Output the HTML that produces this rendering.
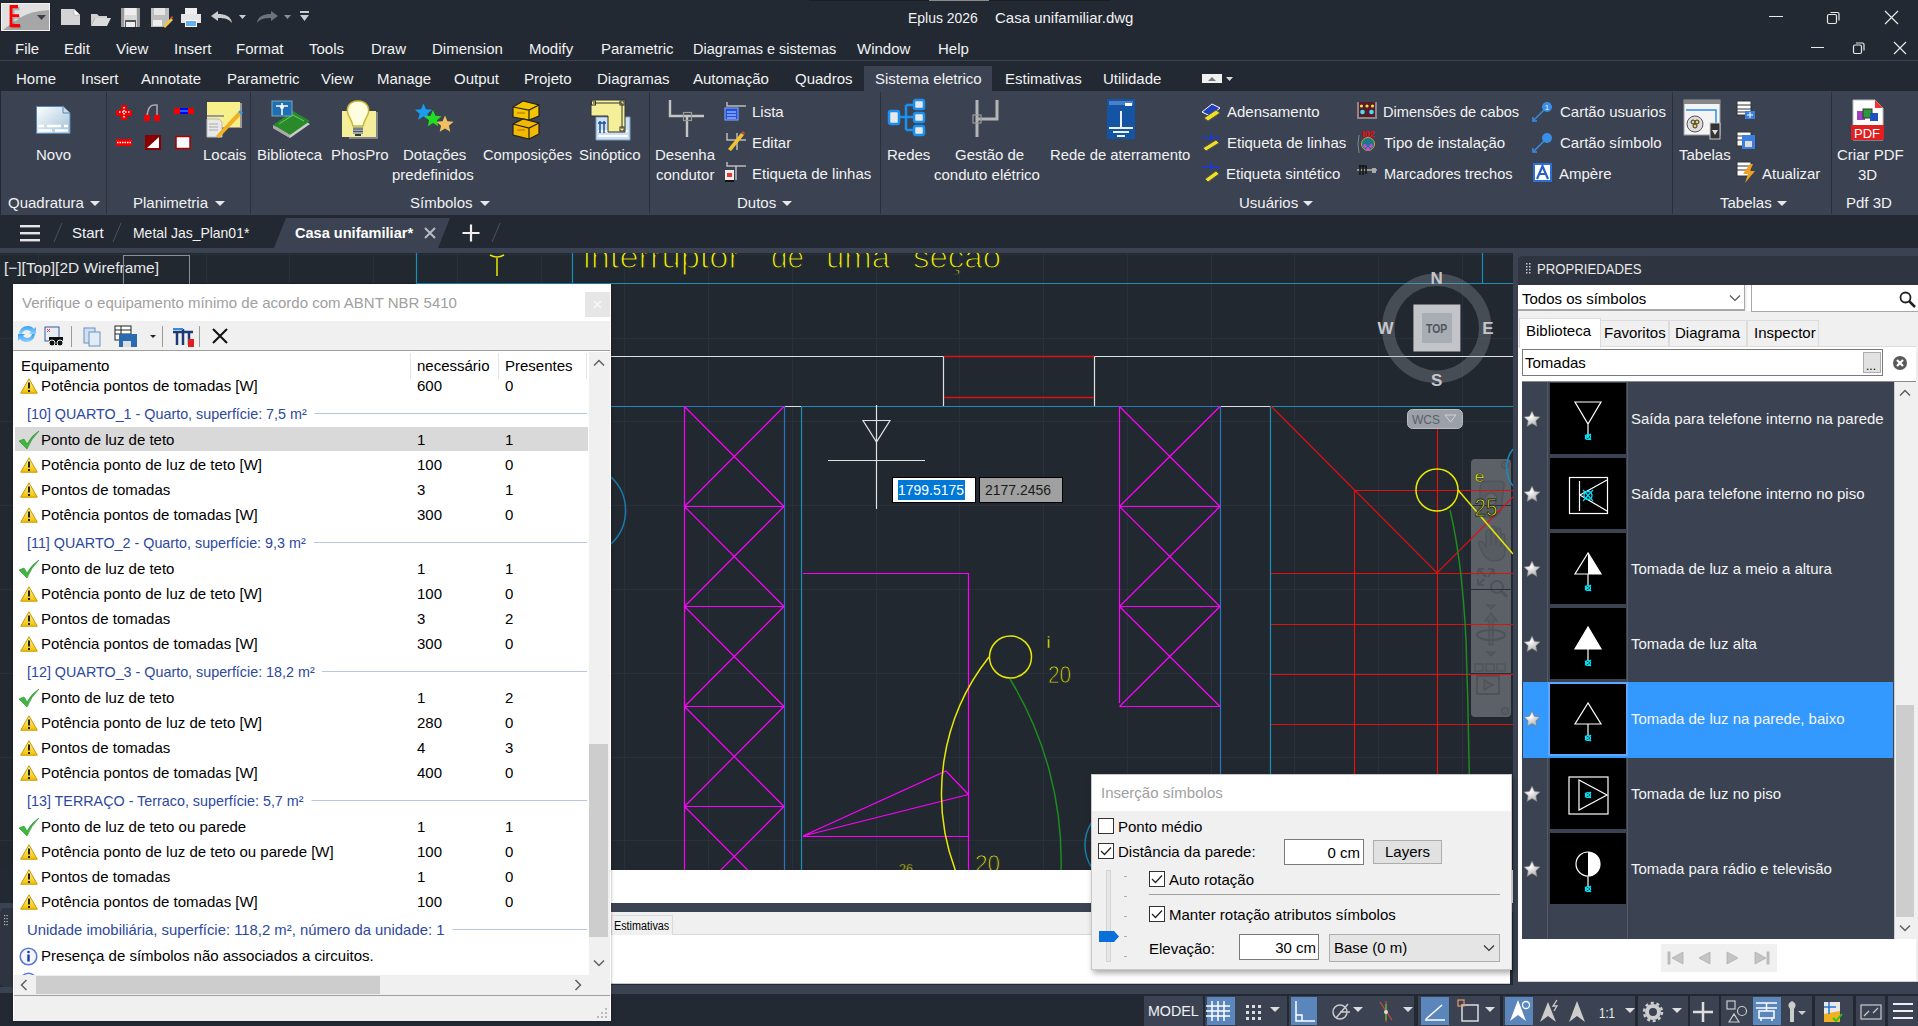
<!DOCTYPE html>
<html><head><meta charset="utf-8">
<style>
*{margin:0;padding:0;box-sizing:border-box}
html,body{width:1918px;height:1026px;overflow:hidden;background:#232933;font-family:"Liberation Sans",sans-serif}
.a{position:absolute}
.t{position:absolute;white-space:pre;font-size:15px;line-height:20px;color:#f2f2f2}
.dk{color:#000}
svg{position:absolute;overflow:visible}
</style></head><body>

<!-- ============ TITLE BAR ============ -->
<div id="title">
<div class="a" style="left:809px;top:0;width:301px;height:1px;background:#1a1d22"></div><div class="a" style="left:929px;top:0;width:60px;height:1px;background:#8a8a8a"></div>
<!-- E button -->
<svg style="left:0;top:2px" width="52" height="30"><rect x="0.5" y="0.5" width="50" height="29" fill="#1e1e1e"/><rect x="1" y="1" width="49" height="28" fill="#f2f2f2"/><rect x="2" y="2" width="47" height="26" fill="#a6a6a6"/><path d="M2 2H49V8Q30 9 20 16Q10 22 3 28H2Z" fill="#e0e0e0"/>
<path d="M10.5 4H18.5V7.2H13.5V12.6H19V15.8H13.5V22H20V25.2H10.5Z" fill="#555" opacity="0.35" transform="translate(1 1)"/>
<path d="M9.6 3H18V6.3H12.4V12.3H19V15H12.4V22H20V25.2H9.6Z" fill="#ff0000"/>
<path d="M37 13H46L41.5 18Z" fill="#3c4048"/></svg>
<!-- QAT icons -->
<svg style="left:60px;top:8px" width="22" height="18"><path d="M1 1H14L20 7V17H1Z" fill="#d4d4d4"/><path d="M14 1V7H20" fill="#fff" stroke="#999" stroke-width="0.5"/></svg>
<svg style="left:90px;top:11px" width="22" height="16"><path d="M1 3H7L9 5H17V7H5L1 15Z" fill="#cfcfcf"/><path d="M5 7H21L17 15H1Z" fill="#dcdcdc"/></svg>
<svg style="left:120px;top:7px" width="22" height="21"><path d="M1 1H20V20H1Z" fill="#d9d9d9"/><path d="M1 1H4V20H1ZM17 1H20V20H17Z" fill="#999"/><rect x="5" y="1" width="11" height="7" fill="#eee"/><rect x="5" y="13" width="11" height="7" fill="#555"/><rect x="6" y="15" width="9" height="5" fill="#eee"/></svg>
<svg style="left:150px;top:7px" width="23" height="21"><path d="M1 1H19V14L13 20H1Z" fill="#bdbdbd"/><rect x="4" y="1" width="11" height="7" fill="#e6e6e6"/><rect x="3" y="13" width="9" height="6" fill="#eee"/><path d="M13 19L21 11L23 13L15 21Z" fill="#f2c542"/><path d="M20 11L22 9L23 10L22 12Z" fill="#e44"/></svg>
<svg style="left:180px;top:7px" width="22" height="21"><rect x="5" y="1" width="12" height="6" fill="#eee"/><rect x="1" y="7" width="20" height="9" fill="#e6e6e6"/><rect x="5" y="13" width="12" height="7" fill="#fff"/><rect x="6" y="14" width="10" height="5" fill="#6ab0e8"/></svg>
<svg style="left:210px;top:10px" width="24" height="14"><path d="M1 6L8 1V4C15 4 21 6 22 13C19 9 15 8 8 8V11Z" fill="#cdcdcd"/></svg>
<svg style="left:239px;top:15px" width="8" height="5"><path d="M0 0H7L3.5 4Z" fill="#ccc"/></svg>
<svg style="left:255px;top:10px" width="24" height="14"><path d="M23 6L16 1V4C9 4 3 6 2 13C5 9 9 8 16 8V11Z" fill="#6e737b"/></svg>
<svg style="left:284px;top:15px" width="8" height="5"><path d="M0 0H7L3.5 4Z" fill="#8a8f96"/></svg>
<svg style="left:300px;top:11px" width="10" height="12"><rect x="0" y="0" width="9" height="2" fill="#ccc"/><path d="M0 4H9L4.5 10Z" fill="#ccc"/></svg>
<div class="t" style="left:908px;top:8px;transform:scaleX(0.93);transform-origin:left">Eplus 2026</div>
<div class="t" style="left:995px;top:8px">Casa unifamiliar.dwg</div>
<div class="a" style="left:1769px;top:16px;width:14px;height:1px;background:#e8e8e8"></div>
<svg style="left:1826px;top:10px" width="15" height="15"><rect x="1.5" y="4.5" width="9" height="9" rx="1.5" fill="none" stroke="#e8e8e8" stroke-width="1.2"/><path d="M4.5 2.5H11.5Q13 2.5 13 4V10.5" fill="none" stroke="#e8e8e8" stroke-width="1.2"/></svg>
<svg style="left:1884px;top:10px" width="15" height="15"><path d="M1 1L14 14M14 1L1 14" stroke="#e8e8e8" stroke-width="1.2"/></svg>
</div>

<!-- ============ MENU ============ -->
<div id="menu">
<div class="t" style="left:15px;top:39px">File</div>
<div class="t" style="left:64px;top:39px">Edit</div>
<div class="t" style="left:116px;top:39px">View</div>
<div class="t" style="left:174px;top:39px">Insert</div>
<div class="t" style="left:236px;top:39px">Format</div>
<div class="t" style="left:309px;top:39px">Tools</div>
<div class="t" style="left:371px;top:39px">Draw</div>
<div class="t" style="left:432px;top:39px">Dimension</div>
<div class="t" style="left:529px;top:39px">Modify</div>
<div class="t" style="left:601px;top:39px">Parametric</div>
<div class="t" style="left:693px;top:39px;transform:scaleX(0.965);transform-origin:left">Diagramas e sistemas</div>
<div class="t" style="left:857px;top:39px">Window</div>
<div class="t" style="left:938px;top:39px">Help</div>
<div class="a" style="left:1811px;top:47px;width:13px;height:1px;background:#e8e8e8"></div>
<svg style="left:1852px;top:41px" width="14" height="14"><rect x="1.5" y="4" width="8" height="8.5" rx="1.5" fill="none" stroke="#e8e8e8" stroke-width="1.2"/><path d="M4 2H10.5Q12 2 12 3.5V9.5" fill="none" stroke="#e8e8e8" stroke-width="1.2"/></svg>
<svg style="left:1893px;top:41px" width="14" height="14"><path d="M1 1L13 13M13 1L1 13" stroke="#e8e8e8" stroke-width="1.2"/></svg>
<div class="a" style="left:0;top:60px;width:1918px;height:1px;background:#3c424d"></div>
<div class="a" style="left:864px;top:66px;width:128px;height:25px;background:#3b4352"></div>
<div class="t" style="left:16px;top:69px">Home</div>
<div class="t" style="left:81px;top:69px">Insert</div>
<div class="t" style="left:141px;top:69px">Annotate</div>
<div class="t" style="left:227px;top:69px">Parametric</div>
<div class="t" style="left:321px;top:69px">View</div>
<div class="t" style="left:377px;top:69px">Manage</div>
<div class="t" style="left:454px;top:69px">Output</div>
<div class="t" style="left:524px;top:69px">Projeto</div>
<div class="t" style="left:597px;top:69px">Diagramas</div>
<div class="t" style="left:693px;top:69px">Automação</div>
<div class="t" style="left:795px;top:69px">Quadros</div>
<div class="t" style="left:875px;top:69px">Sistema eletrico</div>
<div class="t" style="left:1005px;top:69px">Estimativas</div>
<div class="t" style="left:1103px;top:69px">Utilidade</div>
<svg style="left:1202px;top:73px" width="32" height="11"><rect x="0" y="1" width="20" height="9" fill="#f0f0f0"/><path d="M6 8H14L10 4Z" fill="#777"/><path d="M24 4H31L27.5 8Z" fill="#ddd"/></svg>
</div>

<!-- ============ RIBBON ============ -->
<div id="ribbon">
<div class="a" style="left:1px;top:91px;width:1917px;height:124px;background:#3b4352"></div>
<div class="a" style="left:106px;top:92px;width:1px;height:122px;background:#2a3039"></div>
<div class="a" style="left:250px;top:92px;width:1px;height:122px;background:#2a3039"></div>
<div class="a" style="left:649px;top:92px;width:1px;height:122px;background:#2a3039"></div>
<div class="a" style="left:880px;top:92px;width:1px;height:122px;background:#2a3039"></div>
<div class="a" style="left:1672px;top:92px;width:1px;height:122px;background:#2a3039"></div>
<div class="a" style="left:1831px;top:92px;width:1px;height:122px;background:#2a3039"></div>
<div class="t" style="left:8px;top:193px;">Quadratura</div>
<svg style="left:90px;top:201px" width="10" height="6"><path d="M0 0H10L5 5Z" fill="#e8e8e8"/></svg>
<div class="t" style="left:133px;top:193px;">Planimetria</div>
<svg style="left:215px;top:201px" width="10" height="6"><path d="M0 0H10L5 5Z" fill="#e8e8e8"/></svg>
<div class="t" style="left:410px;top:193px;">Símbolos</div>
<svg style="left:480px;top:201px" width="10" height="6"><path d="M0 0H10L5 5Z" fill="#e8e8e8"/></svg>
<div class="t" style="left:737px;top:193px;">Dutos</div>
<svg style="left:782px;top:201px" width="10" height="6"><path d="M0 0H10L5 5Z" fill="#e8e8e8"/></svg>
<div class="t" style="left:1239px;top:193px;">Usuários</div>
<svg style="left:1303px;top:201px" width="10" height="6"><path d="M0 0H10L5 5Z" fill="#e8e8e8"/></svg>
<div class="t" style="left:1720px;top:193px;">Tabelas</div>
<svg style="left:1777px;top:201px" width="10" height="6"><path d="M0 0H10L5 5Z" fill="#e8e8e8"/></svg>
<div class="t" style="left:1846px;top:193px;">Pdf 3D</div>
<div class="t" style="left:36px;top:145px;">Novo</div>
<div class="t" style="left:203px;top:145px;">Locais</div>
<div class="t" style="left:257px;top:145px;">Biblioteca</div>
<div class="t" style="left:331px;top:145px;">PhosPro</div>
<div class="t" style="left:403px;top:145px;">Dotações</div>
<div class="t" style="left:392px;top:165px;">predefinidos</div>
<div class="t" style="left:483px;top:145px;transform:scaleX(0.98);transform-origin:left">Composições</div>
<div class="t" style="left:579px;top:145px;">Sinóptico</div>
<div class="t" style="left:655px;top:145px;">Desenha</div>
<div class="t" style="left:656px;top:165px;">condutor</div>
<div class="t" style="left:887px;top:145px;">Redes</div>
<div class="t" style="left:955px;top:145px;">Gestão de</div>
<div class="t" style="left:934px;top:165px;">conduto elétrico</div>
<div class="t" style="left:1050px;top:145px;transform:scaleX(0.99);transform-origin:left">Rede de aterramento</div>
<div class="t" style="left:1679px;top:145px;">Tabelas</div>
<div class="t" style="left:1837px;top:145px;">Criar PDF</div>
<div class="t" style="left:1858px;top:165px;">3D</div>
<div class="t" style="left:752px;top:102px;">Lista</div>
<div class="t" style="left:752px;top:133px;">Editar</div>
<div class="t" style="left:752px;top:164px;">Etiqueta de linhas</div>
<div class="t" style="left:1227px;top:102px;">Adensamento</div>
<div class="t" style="left:1227px;top:133px;">Etiqueta de linhas</div>
<div class="t" style="left:1226px;top:164px;">Etiqueta sintético</div>
<div class="t" style="left:1383px;top:102px;transform:scaleX(0.972);transform-origin:left">Dimensões de cabos</div>
<div class="t" style="left:1384px;top:133px;">Tipo de instalação</div>
<div class="t" style="left:1384px;top:164px;transform:scaleX(0.97);transform-origin:left">Marcadores trechos</div>
<div class="t" style="left:1560px;top:102px;">Cartão usuarios</div>
<div class="t" style="left:1560px;top:133px;">Cartão símbolo</div>
<div class="t" style="left:1559px;top:164px;">Ampère</div>
<div class="t" style="left:1762px;top:164px;">Atualizar</div>
<svg style="left:36px;top:106px" width="35" height="28"><defs><linearGradient id="gn" x1="0" y1="0" x2="1" y2="1"><stop offset="0" stop-color="#ffffff"/><stop offset="1" stop-color="#9fc0d8"/></linearGradient></defs><path d="M0.5 0.5H27L34 7V27.5H0.5Z" fill="url(#gn)" stroke="#5b85b3"/><path d="M27 0.5V7H34" fill="#c8dcec" stroke="#5b85b3"/><path d="M2 20H8M11 20H25M28 20H32M2 24.5H16M19 24.5H32" stroke="#fff" stroke-width="2.5"/></svg>
<svg style="left:115px;top:103px" width="80" height="47">
<path d="M6 2H12V7H17V13H12V17H6V13H1V7H6Z" fill="#e00" /><path d="M4 9H15M9 4V15" stroke="#fff" stroke-width="1.5" stroke-dasharray="1.5 1.5"/>
<path d="M32 14Q33 1 40 2H42V14" fill="none" stroke="#aaa" stroke-width="1.5"/><rect x="29" y="12" width="6" height="6" fill="#e00"/><rect x="39" y="12" width="6" height="6" fill="#e00"/>
<rect x="59" y="5" width="6" height="6" fill="#e00"/><rect x="73" y="5" width="6" height="6" fill="#e00"/><rect x="65" y="5" width="8" height="6" fill="#00f"/><path d="M65 8H73" stroke="#3cf"/>
<path d="M1 36H17V43H1Z" fill="#e00"/><path d="M2 39.5H16" stroke="#fff" stroke-width="1.5" stroke-dasharray="1.5 1"/>
<rect x="30" y="32" width="16" height="15" fill="#800"/><path d="M32 45L44 34V45Z" fill="#fff"/>
<rect x="61" y="33.5" width="14" height="12" fill="#fff" stroke="#a00" stroke-width="1.5"/>
</svg>
<svg style="left:206px;top:101px" width="38" height="38"><path d="M35 2V26H15" fill="none" stroke="#999" stroke-width="2"/><rect x="1" y="1" width="33" height="25" fill="#f7f08a"/><rect x="1" y="14" width="17" height="2" fill="#999"/><path d="M1 18H13L16 21V36H1Z" fill="#e8e8e8" stroke="#bbb"/><path d="M3 23H12M3 26H12M3 29H12" stroke="#aaa"/><path d="M10 35L32 11L35 14L13 37Z" fill="#f0b020"/><path d="M32 11L34 9L37 12L35 14Z" fill="#3a9ae8"/></svg>
<svg style="left:271px;top:100px" width="40" height="40"><path d="M2 28L22 14L39 24L19 38Z" fill="#ccc"/><path d="M2 25L22 11L39 21L19 35Z" fill="#2a8a2a"/><path d="M2 25V28L19 38V35Z" fill="#aaa"/><path d="M8 24L22 15L33 21" fill="none" stroke="#6c6" /><rect x="1" y="1" width="20" height="15" fill="#1f6fb5" stroke="#7ab" /><path d="M11 3V15M5 6H17" stroke="#fff" stroke-width="1.5"/><circle cx="11" cy="7" r="2" fill="#fff"/></svg>
<svg style="left:341px;top:100px" width="37" height="39"><path d="M36 12V38H8" fill="none" stroke="#999" stroke-width="1.5"/><rect x="1" y="11" width="34" height="26" fill="#f4ee9a"/><path d="M17 1C8 1 5 8 7 14C9 19 11 21 12 26H22C23 21 25 19 27 14C29 8 26 1 17 1Z" fill="#fffde0" stroke="#c8b830" stroke-width="1.5"/><rect x="12" y="27" width="10" height="7" fill="#9aa"/><path d="M12 29H22M12 31.5H22" stroke="#556"/><rect x="14" y="34" width="6" height="2" fill="#333"/></svg>
<svg style="left:410px;top:100px" width="50" height="36"><polygon points="13.5,3.5 15.9,9.2 22.1,9.7 17.4,13.8 18.8,19.8 13.5,16.6 8.2,19.8 9.6,13.8 4.9,9.7 11.1,9.2" fill="#1a9cf0"/><polygon points="23.0,10.0 25.4,15.7 31.6,16.2 26.9,20.3 28.3,26.3 23.0,23.1 17.7,26.3 19.1,20.3 14.4,16.2 20.6,15.7" fill="#22dd22"/><polygon points="35.0,15.5 37.4,21.2 43.6,21.7 38.9,25.8 40.3,31.8 35.0,28.6 29.7,31.8 31.1,25.8 26.4,21.7 32.6,21.2" fill="#f0c060"/></svg>
<svg style="left:511px;top:99px" width="30" height="42"><path d="M2 8L12 2L28 6V17L18 21L2 18Z" fill="#f5c400" stroke="#222" stroke-width="1.2"/><path d="M2 8L18 11L28 6M18 11V21" fill="none" stroke="#222" stroke-width="1.2"/><path d="M2 25L12 20L28 24V35L18 40L2 36Z" fill="#f5b800" stroke="#222" stroke-width="1.2"/><path d="M2 25L18 29L28 24M18 29V40" fill="none" stroke="#222" stroke-width="1.2"/><path d="M6 14H14M6 31H14" stroke="#b07000"/></svg>
<svg style="left:590px;top:99px" width="42" height="42"><path d="M6 18H40V41H6Z" fill="#cfe0ef" stroke="#7aa0c8"/><path d="M8 32H38M8 37H38" stroke="#fff" stroke-width="2"/><path d="M1 1H35V33H18V17H1Z" fill="#f5ef9a" stroke="#333"/><path d="M3 4H32V30" fill="none" stroke="#333"/><rect x="1.5" y="2" width="4" height="4" fill="none" stroke="#333"/><rect x="30" y="2" width="4" height="4" fill="none" stroke="#333"/><rect x="30" y="28" width="4" height="4" fill="none" stroke="#333"/><path d="M10 22V34M14 22V34M8 24H16" stroke="#1a4fa0" stroke-width="1.5"/></svg>
<svg style="left:668px;top:99px" width="40" height="40"><path d="M2 1V17H36M19 17V38" fill="none" stroke="#c4c4c4" stroke-width="2.4"/><rect x="15.5" y="13.5" width="8" height="8" fill="none" stroke="#999" stroke-width="1.2"/></svg>
<svg style="left:724px;top:100px" width="24" height="84">
<path d="M3 2V6H22" fill="none" stroke="#bbb" stroke-width="1.5"/><rect x="1" y="8" width="13" height="12" fill="#2050e0" stroke="#8af"/><path d="M3 12H12M3 15H12M3 18H12" stroke="#cdf"/>
<path d="M3 33V40H22M13 33V50" fill="none" stroke="#bbb" stroke-width="1.5"/><path d="M4 49L17 33L20 35L7 51Z" fill="#f2c530"/><path d="M17 33L19 31L21 33L20 35Z" fill="#c44"/>
<path d="M3 62V66H22M12 66V80" fill="none" stroke="#bbb" stroke-width="1.5"/><rect x="1" y="70" width="9" height="10" fill="#eee"/><rect x="3" y="73" width="5" height="4" fill="#e33"/><rect x="1" y="80" width="9" height="2" fill="#111"/>
</svg>
<svg style="left:888px;top:98px" width="40" height="40"><rect x="1" y="13" width="10" height="13" rx="2" fill="#e8e8e8" stroke="#1a90f0" stroke-width="2.5"/><rect x="26" y="2" width="10" height="9" rx="2" fill="#e8e8e8" stroke="#1a90f0" stroke-width="2.5"/><rect x="26" y="15" width="10" height="9" rx="2" fill="#e8e8e8" stroke="#1a90f0" stroke-width="2.5"/><rect x="26" y="28" width="10" height="9" rx="2" fill="#e8e8e8" stroke="#1a90f0" stroke-width="2.5"/><path d="M11 19H18M18 7H25M18 19H25M18 32H25M18 7V32" fill="none" stroke="#1a90f0" stroke-width="2.5"/></svg>
<svg style="left:972px;top:99px" width="28" height="40"><path d="M5 1V38M5 20H25V1" fill="none" stroke="#b4b4b4" stroke-width="3"/><rect x="1" y="16" width="8" height="8" fill="none" stroke="#999" stroke-width="1.2"/></svg>
<svg style="left:1107px;top:99px" width="29" height="41"><rect x="0" y="0" width="28" height="40" fill="#1454a4"/><rect x="2" y="2" width="24" height="4" fill="#4a80c8"/><rect x="18" y="4" width="7" height="3" fill="#fff"/><path d="M14 12V29M2 29H26M6 33H22M10 37H18" stroke="#f0f0f0" stroke-width="2"/></svg>
<svg style="left:1200px;top:100px" width="22" height="84">
<path d="M2 12L12 4L20 8L10 16Z" fill="#2040c0" stroke="#fff"/><path d="M4 18L16 10L20 13L8 21Z" fill="#f0e020" stroke="#555"/>
<path d="M2 38H20M11 33V40" stroke="#1a3ae0" stroke-width="1.5"/><path d="M3 48L16 40L19 43L6 51Z" fill="#f0e020" stroke="#555"/>
<path d="M2 67H20M11 62V69" stroke="#1a3ae0" stroke-width="1.5"/><path d="M5 79L16 71L19 74L8 82Z" fill="#f0e020" stroke="#555"/>
</svg>
<svg style="left:1356px;top:100px" width="22" height="84">
<path d="M1 2V19H21V2" fill="#888"/><rect x="3" y="2" width="16" height="15" fill="#5a1a2a"/><circle cx="5.5" cy="6" r="1.6" fill="#f0e040"/><circle cx="11" cy="6" r="1.6" fill="#f0e040"/><circle cx="16.5" cy="6" r="1.6" fill="#f0e040"/><circle cx="6.5" cy="12" r="2.3" fill="#40e0f0"/><circle cx="15.5" cy="12" r="2.3" fill="#40e0f0"/>
<text x="6" y="37" font-size="9" font-family="Liberation Sans" font-weight="bold" fill="#f00">I02</text><circle cx="12" cy="44" r="6.5" fill="#1a7a8a" stroke="#c8a040"/><circle cx="9" cy="46" r="1.8" fill="#e040e0"/><circle cx="15" cy="46" r="1.8" fill="#e040e0"/><circle cx="12" cy="49" r="1.8" fill="#e040e0"/><path d="M3 35Q1 44 3 53" stroke="#7a8a90" fill="none"/>
<path d="M1 70H21" stroke="#999" stroke-width="2"/><path d="M4 65V75M7 65V75M10 66V74" stroke="#111" stroke-width="1.5"/><path d="M3 66H11" stroke="#111" stroke-width="1.2"/><rect x="16" y="68" width="4" height="5" fill="#aaa"/>
</svg>
<svg style="left:1532px;top:100px" width="22" height="84">
<path d="M2 20L14 8" stroke="#3a8ee8" stroke-width="1.5"/><circle cx="15" cy="7" r="5" fill="#3a8ee8"/><path d="M1 17V21H5" fill="none" stroke="#3a8ee8" stroke-width="1.5"/><text x="13" y="10" font-size="7" fill="#fff" font-family="Liberation Sans">1</text>
<path d="M2 51L14 39" stroke="#3a8ee8" stroke-width="1.5"/><circle cx="15" cy="38" r="5" fill="#3a8ee8"/><path d="M1 48V52H5" fill="none" stroke="#3a8ee8" stroke-width="1.5"/>
<rect x="1" y="63" width="19" height="19" fill="#2a70d8"/><rect x="3" y="65" width="15" height="15" fill="#fff"/><path d="M5 79L10.5 66L16 79M7 74H14" fill="none" stroke="#2a60c8" stroke-width="2.2"/>
</svg>
<svg style="left:1684px;top:100px" width="38" height="40"><rect x="0" y="0" width="36" height="35" fill="#f4f4f4" stroke="#999"/><rect x="0" y="0" width="36" height="4" fill="#888"/><path d="M2 10H32V24" fill="none" stroke="#2a90e0" stroke-width="1.5"/><circle cx="11" cy="24" r="8" fill="#ddd" stroke="#555"/><circle cx="9" cy="22" r="2" fill="#f0d060" stroke="#333"/><circle cx="13" cy="22" r="2" fill="#f0d060" stroke="#333"/><circle cx="11" cy="26" r="2" fill="#f0d060" stroke="#333"/><rect x="26" y="23" width="10" height="16" fill="#333" stroke="#ccc"/><path d="M28 30H34L31 35Z" fill="#ddd"/></svg>
<svg style="left:1736px;top:100px" width="22" height="84">
<rect x="1" y="1" width="14" height="14" fill="#fff" stroke="#333"/><path d="M1 5H15M1 9H15M1 12H15" stroke="#333"/><rect x="9" y="11" width="10" height="8" fill="#3a80e0"/><path d="M11 15H17M14 12V18" stroke="#fff"/>
<rect x="1" y="32" width="14" height="14" fill="#fff" stroke="#333"/><path d="M1 36H15M1 40H15" stroke="#333"/><rect x="6" y="35" width="13" height="14" fill="#3a80e0"/><rect x="9" y="41" width="7" height="6" fill="#ddd"/>
<rect x="1" y="62" width="14" height="14" fill="#fff" stroke="#333"/><path d="M1 66H15M1 70H15" stroke="#333"/><path d="M14 64L7 74H12L9 83L19 71H14L17 64Z" fill="#f0a020"/>
</svg>
<svg style="left:1850px;top:99px" width="36" height="42"><path d="M3 1H25L33 9V41H3Z" fill="#fff" stroke="#bbb"/><path d="M25 1V9H33Z" fill="#e33"/><rect x="7" y="12" width="8" height="9" fill="#a040c0"/><rect x="13" y="10" width="9" height="9" fill="#2a9a3a" stroke="#333"/><rect x="20" y="14" width="8" height="8" fill="#2050c0"/><rect x="1" y="26" width="33" height="15" fill="#e02020"/><text x="4" y="39" font-size="13" font-family="Liberation Sans" fill="#fff">PDF</text></svg>
</div>

<!-- ============ FILE TABS ============ -->
<div id="ftabs">
<div class="a" style="left:0;top:248px;width:1918px;height:5px;background:#3b4352"></div>
<svg style="left:0;top:215px" width="520" height="38">
<path d="M274 33L286 3H450L438 33Z" fill="#3b4352"/>
<rect x="20" y="10" width="20" height="2.4" fill="#e6e6e6"/><rect x="20" y="17" width="20" height="2.4" fill="#e6e6e6"/><rect x="20" y="24" width="20" height="2.4" fill="#e6e6e6"/>
<path d="M62 8L54 27M121 8L113 27M500 8L492 27" stroke="#4c535e" stroke-width="1"/>
<path d="M425 13L435 23M435 13L425 23" stroke="#b7bbc2" stroke-width="2"/>
<path d="M471 9.5V26.5M462.5 18H479.5" stroke="#f0f0f0" stroke-width="2.2"/>
</svg>
<div class="t" style="left:72px;top:223px">Start</div>
<div class="t" style="left:133px;top:223px;transform:scaleX(0.93);transform-origin:left">Metal Jas_Plan01*</div>
<div class="t" style="left:295px;top:223px;font-weight:bold;color:#fff;transform:scaleX(0.97);transform-origin:left">Casa unifamiliar*</div>
</div>

<!-- ============ VIEWPORT ============ -->
<div id="viewport">
<div class="a" style="left:0;top:253px;width:1513px;height:617px;background:#222830"></div>
<div class="a" style="left:1471px;top:459px;width:40px;height:258px;background:rgba(150,154,160,0.5);border-radius:4px"></div>
<svg style="left:1471px;top:459px" width="40" height="258">
<g fill="#575b62" stroke="#4e5259" stroke-width="1.2">
<circle cx="34" cy="6" r="3.5"/>
<path d="M9 30Q9 22 18 22H30Q34 22 33 28L30 50Q29 58 20 59Q9 58 9 48Z"/>
<circle cx="20" cy="40" r="6" fill="#62666d"/>
<path d="M8 86Q6 82 10 82Q13 83 15 88V74Q15 71 17.5 71Q20 71 20 74V86V70Q20 67 22.5 67Q25 67 25 70V86V72Q25 69 27.5 69Q30 69 30 72V88V78Q30 75 32 75Q34 75 34 78V92Q34 102 22 102Q14 102 8 86Z"/>
<path d="M7 110L15 118M7 110V116M7 110H13M23 110L17 118M23 110V116M23 110H17M7 126L13 120M7 126V120M7 126H13" fill="none" stroke="#4e5259" stroke-width="2"/>
<circle cx="26" cy="128" r="6" fill="none" stroke="#4e5259" stroke-width="2.2"/><path d="M30 132L36 138" stroke="#4e5259" stroke-width="3"/>
<path d="M16 146H24L20 150Z"/>
<path d="M20 154L14 162H18V186H22V162H26Z"/><ellipse cx="20" cy="176" rx="14" ry="5" fill="none" stroke="#4e5259" stroke-width="2"/>
<path d="M16 193H24L20 197Z"/>
<rect x="4" y="205" width="8" height="7" fill="none"/><rect x="15" y="205" width="8" height="7" fill="none"/><rect x="26" y="205" width="8" height="7" fill="none"/>
<rect x="6" y="217" width="22" height="18" fill="none" stroke-width="1.8"/><path d="M13 221V231L22 226Z"/>
<circle cx="34" cy="252" r="3.5"/>
</g>
</svg>
<svg style="left:0;top:0" width="1918" height="1026"><defs><clipPath id="vp"><rect x="0" y="253" width="1513" height="617"/></clipPath></defs><g clip-path="url(#vp)" fill="none" stroke-width="1" shape-rendering="crispEdges">
<path d="M38.5 253V870 M122.5 253V870 M206.5 253V870 M289.5 253V870 M373.5 253V870 M457.5 253V870 M541.5 253V870 M624.5 253V870 M708.5 253V870 M792.5 253V870 M876.5 253V870 M959.5 253V870 M1043.5 253V870 M1127.5 253V870 M1211.5 253V870 M1294.5 253V870 M1378.5 253V870 M1462.5 253V870 M0 254.5H1513 M0 338.5H1513 M0 421.5H1513 M0 505.5H1513 M0 589.5H1513 M0 673.5H1513 M0 757.5H1513 M0 840.5H1513" stroke="#2a303b"/>
</g><g clip-path="url(#vp)" fill="none" stroke-width="1.2">
<path d="M416.5 253V283.5H1513M572.5 253V283.5M1482.5 253V283.5" stroke="#1a8fb8"/>
<path d="M14 356.5H943.5M943.5 356.5V406M1094.5 356.5V406M1094.5 356.5H1513" stroke="#e0e0e0"/>
<path d="M944 356.5H1094M944 397.5H1094" stroke="#e01010" stroke-width="1.5"/>
<path d="M14 406.5H684M801 406.5H1119M1270 406.5H1513" stroke="#1a8fb8"/>
<path d="M684 406.5H784M1119.5 406.5H1220" stroke="#2a74c0"/>
<path d="M785 406.5H801M1221 406.5H1270" stroke="#e0e0e0"/>
<path d="M784.5 406V870M1220.5 406V870" stroke="#2a74c0"/>
<path d="M801.5 406V870M1270.5 406V870" stroke="#1a8fb8"/>
<path d="M684.5 406V870M684.5 406.5L784 506.5M784 406.5L684.5 506.5M684.5 506.5H784M684.5 506.5L784 606.5M784 506.5L684.5 606.5M684.5 606.5H784M684.5 606.5L784 706.5M784 606.5L684.5 706.5M684.5 706.5H784M684.5 706.5L784 806.5M784 706.5L684.5 806.5M684.5 806.5H784M684.5 806.5L784 906.5M784 806.5L684.5 906.5M684.5 906.5H784" stroke="#ff00ff"/>
<path d="M1119.5 406V703M1119.5 406.5L1220 506.5M1220 406.5L1119.5 506.5M1119.5 506.5H1220M1119.5 506.5L1220 606.5M1220 506.5L1119.5 606.5M1119.5 606.5H1220M1119.5 606.5L1220 706.5M1220 606.5L1119.5 706.5M1119.5 706.5H1220" stroke="#ff00ff"/>
<path d="M803 573.5H968.5V870M803 836.5H968.5M803 836L946 771L968.5 794.5L803 836" stroke="#ff00ff"/>
<path d="M1271 406L1437 573L1513 497M1354.5 490V870M1354.5 490.5H1513M1437.5 427V870M1271 573.5H1513M1271 624.5H1513M1271 674.5H1513M1271 724.5H1513" stroke="#e01010"/>
<circle cx="1437" cy="490" r="21" stroke="#e8e800" stroke-width="1.5"/>
<path d="M1458 490L1513 554" stroke="#e8e800" stroke-width="1.5"/>
<path d="M1450 510Q1462 560 1466 640Q1470 760 1470 870" stroke="#1f8a1f" stroke-width="1.5"/>
<circle cx="1010.5" cy="657" r="21" stroke="#e8e800" stroke-width="1.5"/>
<path d="M989 657A220 220 0 0 0 956 872" stroke="#e8e800" stroke-width="1.5"/>
<path d="M1010 679A349 349 0 0 1 1061 872" stroke="#1f8a1f" stroke-width="1.5"/>
<path d="M611 477A45.7 45.7 0 0 1 611 544" stroke="#1a7aa8" stroke-width="1.5"/><path d="M1092 822A41 41 0 0 0 1092 868" stroke="#1a7aa8" stroke-width="1.5"/>
<path d="M1513 449A30 30 0 0 0 1513 486" stroke="#1a8ac0" stroke-width="1.5"/>
<path d="M490 255Q497 259 504 255M497 258V276" stroke="#e8e800" stroke-width="1.5"/>
<path d="M876.5 405V509M828 460.5H925M863 420.5H890L876.5 442Z" stroke="#e0e0e0" stroke-width="1.2"/>
<g clip-path="url(#vp)" font-family="Liberation Sans" fill="#f0f000" stroke="#222830" stroke-width="1.0">
<text x="583" y="268" font-size="31" textLength="157" lengthAdjust="spacingAndGlyphs" stroke-width="1.2">interruptor</text>
<text x="771" y="268" font-size="31" textLength="33" lengthAdjust="spacingAndGlyphs" stroke-width="1.2">de</text>
<text x="826" y="268" font-size="31" textLength="64" lengthAdjust="spacingAndGlyphs" stroke-width="1.2">uma</text>
<text x="913" y="268" font-size="31" textLength="88" lengthAdjust="spacingAndGlyphs" stroke-width="1.2">seção</text>
<text x="1046.5" y="648" font-size="17" textLength="4" lengthAdjust="spacingAndGlyphs" stroke-width="0.4">i</text>
<text x="1048" y="683" font-size="23.5" textLength="23" lengthAdjust="spacingAndGlyphs" stroke-width="1.0">20</text>
<text x="975" y="872" font-size="23.5" textLength="25" lengthAdjust="spacingAndGlyphs" stroke-width="1.0">20</text>
<text x="1474.5" y="482" font-size="17" textLength="10" lengthAdjust="spacingAndGlyphs" stroke-width="0.5">e</text>
<text x="1474.5" y="516" font-size="24" textLength="23" lengthAdjust="spacingAndGlyphs" stroke-width="1.0">25</text>
<text x="899" y="874" font-size="14" textLength="14" lengthAdjust="spacingAndGlyphs" stroke-width="0.5">26</text>
</g></svg>
<div class="a" style="left:892px;top:477px;width:84px;height:26px;background:#fff;border:1px solid #000"></div>
<div class="a" style="left:898px;top:480px;width:67px;height:20px;background:#0078d7"></div>
<div class="t" style="left:898px;top:480px;color:#fff;transform:scaleX(0.93);transform-origin:left">1799.5175</div>
<div class="a" style="left:979px;top:477px;width:84px;height:26px;background:#a0a0a0;border:1px solid #000"></div>
<div class="t" style="left:985px;top:480px;color:#1a1a1a;transform:scaleX(0.93);transform-origin:left">2177.2456</div>
<div class="t" style="left:4px;top:258px;color:#e8e8e8;transform:scaleX(1.03);transform-origin:left">[−][Top][2D Wireframe]</div>
<div class="a" style="left:123px;top:255px;width:67px;height:29px;border:1px solid #8a8e94;border-bottom:none"></div>
</div>

<svg style="left:1370px;top:262px" width="135" height="170">
<circle cx="66.7" cy="66.2" r="48.5" fill="none" stroke="rgba(150,155,162,0.32)" stroke-width="12.5"/>
<rect x="43.4" y="42.5" width="47" height="47" fill="#c2c4c8"/><rect x="52" y="51" width="30" height="30" fill="#a8adb4"/>
<text x="66.7" y="71" font-size="13" font-family="Liberation Sans" fill="#4f555d" text-anchor="middle" font-weight="bold" transform="translate(66.7 0) scale(0.8 1) translate(-66.7 0)">TOP</text>
<text x="66.7" y="22" font-size="17" font-family="Liberation Sans" fill="#c4c6ca" text-anchor="middle" font-weight="bold">N</text>
<text x="66.7" y="124" font-size="17" font-family="Liberation Sans" fill="#c4c6ca" text-anchor="middle" font-weight="bold">S</text>
<text x="15.5" y="72" font-size="17" font-family="Liberation Sans" fill="#c4c6ca" text-anchor="middle" font-weight="bold">W</text>
<text x="118" y="72" font-size="17" font-family="Liberation Sans" fill="#c4c6ca" text-anchor="middle" font-weight="bold">E</text>
<rect x="37.5" y="147.5" width="55" height="19" rx="5" fill="#9ca0a8" stroke="#b8bbc0"/>
<text x="42" y="162" font-size="12" font-family="Liberation Sans" fill="#5a5f67">WCS</text>
<path d="M75 153H86L80.5 160Z" fill="none" stroke="#d0d2d6" stroke-width="1"/>
</svg>


<!-- ============ BOTTOM / COMMAND ============ -->
<div id="bottom">
<div class="a" style="left:13px;top:870px;width:1500px;height:33px;background:#fff"></div>
<div class="a" style="left:0;top:903px;width:1513px;height:9px;background:#3b4352"></div>
<div class="a" style="left:0;top:908px;width:13px;height:79px;background:#2f3540;border-radius:5px 0 0 5px"></div>
<svg style="left:4px;top:915px" width="4" height="11"><g fill="#b8bcc2"><rect x="0" y="0" width="1.2" height="1.2"/><rect x="2.5" y="0" width="1.2" height="1.2"/><rect x="0" y="3" width="1.2" height="1.2"/><rect x="2.5" y="3" width="1.2" height="1.2"/><rect x="0" y="6" width="1.2" height="1.2"/><rect x="2.5" y="6" width="1.2" height="1.2"/><rect x="0" y="9" width="1.2" height="1.2"/><rect x="2.5" y="9" width="1.2" height="1.2"/></g></svg>
<div class="a" style="left:0;top:987px;width:13px;height:6px;background:#3b4352"></div>
<div class="a" style="left:13px;top:912px;width:1497px;height:23px;background:#f0f0f0;border-bottom:1px solid #d9d9d9"></div>
<div class="a" style="left:611px;top:915px;width:62px;height:20px;background:#f0f0f0;border:1px solid #dadada;border-bottom:none"></div>
<div class="t" style="left:614px;top:917px;font-size:12px;line-height:18px;color:#000;transform:scaleX(0.9);transform-origin:left">Estimativas</div>
<div class="a" style="left:13px;top:935px;width:1497px;height:49px;background:#fff;border-bottom:1px solid #c8c8c8"></div>
<div class="a" style="left:13px;top:985px;width:1905px;height:9px;background:#3b4352"></div>
</div>

<!-- ============ STATUS BAR ============ -->
<div id="status">
<div class="a" style="left:1144px;top:996px;width:59px;height:30px;background:#3b4352"></div>
<div class="a" style="left:1205px;top:996px;width:82px;height:30px;background:#3b4352"></div>
<div class="a" style="left:1289px;top:996px;width:125px;height:30px;background:#3b4352"></div>
<div class="a" style="left:1418px;top:996px;width:82px;height:30px;background:#3b4352"></div>
<div class="a" style="left:1503px;top:996px;width:132px;height:30px;background:#3b4352"></div>
<div class="a" style="left:1638px;top:996px;width:50px;height:30px;background:#3b4352"></div>
<div class="a" style="left:1690px;top:996px;width:29px;height:30px;background:#3b4352"></div>
<div class="a" style="left:1721px;top:996px;width:91px;height:30px;background:#3b4352"></div>
<div class="a" style="left:1815px;top:996px;width:38px;height:30px;background:#3b4352"></div>
<div class="a" style="left:1856px;top:996px;width:29px;height:30px;background:#3b4352"></div>
<div class="a" style="left:1888px;top:996px;width:30px;height:30px;background:#3b4352"></div>
<div class="a" style="left:1207px;top:997px;width:28px;height:28px;background:#5a86bb"></div>
<div class="a" style="left:1291px;top:997px;width:26px;height:28px;background:#5a86bb"></div>
<div class="a" style="left:1421px;top:997px;width:28px;height:28px;background:#5a86bb"></div>
<div class="a" style="left:1505px;top:997px;width:28px;height:28px;background:#5a86bb"></div>
<div class="a" style="left:1753px;top:997px;width:28px;height:28px;background:#5a86bb"></div>
<div class="t" style="left:1148px;top:1001px;transform:scaleX(0.95);transform-origin:left">MODEL</div>
<svg style="left:1100px;top:996px" width="818" height="30">
<path d="M112 5V25M118 5V25M124 5V25M106 10H130M106 15H130M106 20H130" stroke="#fff" stroke-width="1.5"/>
<g fill="#ddd"><rect x="146" y="9" width="3" height="3"/><rect x="152" y="9" width="3" height="3"/><rect x="158" y="9" width="3" height="3"/><rect x="146" y="15" width="3" height="3"/><rect x="152" y="15" width="3" height="3"/><rect x="158" y="15" width="3" height="3"/><rect x="146" y="21" width="3" height="3"/><rect x="152" y="21" width="3" height="3"/><rect x="158" y="21" width="3" height="3"/></g>
<path d="M170 11H180L175 16Z" fill="#ddd"/>
<path d="M196 5V25H215M196 19H202V25" fill="none" stroke="#fff" stroke-width="1.5"/>
<circle cx="240" cy="16" r="7" fill="none" stroke="#ccc" stroke-width="1.5"/><path d="M236 22L248 8M240 16H250" stroke="#ccc" stroke-width="1.5"/>
<path d="M253 11H263L258 16Z" fill="#ddd"/>
<path d="M280 6L292 24M286 5V26" stroke="#c44" stroke-width="1.3"/><path d="M286 8V24" stroke="#3c3" stroke-width="1.3"/><circle cx="286" cy="16" r="2" fill="#ddd"/>
<path d="M303 11H313L308 16Z" fill="#ddd"/>
<path d="M325 24H345M326 23L342 9" stroke="#fff" stroke-width="1.5"/>
<rect x="362" y="9" width="16" height="16" fill="none" stroke="#ddd" stroke-width="1.5"/><rect x="358" y="4" width="6" height="6" fill="none" stroke="#e99a70" stroke-width="1.2"/>
<path d="M385 11H395L390 16Z" fill="#ddd"/>
<path d="M418 4L410 25L418 19L426 25Z" fill="#fff"/><circle cx="426" cy="9" r="3.5" fill="none" stroke="#fff" stroke-width="1.3"/>
<path d="M448 6L440 26L448 20L456 26Z" fill="#ccc"/><path d="M457 4L453 10H457L454 15" fill="none" stroke="#ccc" stroke-width="1.3"/>
<path d="M477 5L469 26L477 20L485 26Z" fill="#ccc"/>
<text x="499" y="22" font-size="15" font-family="Liberation Sans" fill="#eee" textLength="16" lengthAdjust="spacingAndGlyphs">1:1</text>
<path d="M525 12H535L530 17Z" fill="#ddd"/>
<circle cx="553" cy="16" r="6" fill="none" stroke="#ccc" stroke-width="4"/><circle cx="553" cy="16" r="9" fill="none" stroke="#ccc" stroke-width="2.5" stroke-dasharray="3 2.7"/>
<path d="M572 12H582L577 17Z" fill="#ddd"/>
<path d="M603 6V26M593 16H613" stroke="#ddd" stroke-width="2.5"/>
<rect x="627" y="5" width="8" height="8" fill="none" stroke="#ccc" stroke-width="1.2"/><circle cx="642" cy="15" r="4.5" fill="none" stroke="#ccc" stroke-width="1.2"/><path d="M629 26L634 18L639 26Z" fill="none" stroke="#ccc" stroke-width="1.2"/>
<path d="M656 7H677M656 12H677M666.5 7V15M659 15H674V22H659ZM661 22V25M672 22V25" fill="none" stroke="#fff" stroke-width="1.5"/>
<path d="M692 5Q686 8 690 13V26H694V13Q698 8 692 5Z" fill="#ccc"/><path d="M698 15H706L702 19Z" fill="#ccc"/>
<rect x="724" y="6" width="16" height="20" fill="#e8e8e8"/><path d="M724 18L740 15V26H724Z" fill="#f0b020"/><path d="M729 6V18M724 11H736" stroke="#2a70d8" stroke-width="1.5"/><path d="M733 22L736 25L742 18" fill="none" stroke="#2c2" stroke-width="1.8"/>
<rect x="761" y="9" width="20" height="14" fill="none" stroke="#ccc" stroke-width="1.2"/><path d="M764 20L769 15M778 12L773 17" stroke="#ccc" stroke-width="1.3"/>
<path d="M801 0" />
</svg>
<svg style="left:1893px;top:1002px" width="22" height="18"><path d="M0 2H20M0 9H20M0 16H20" stroke="#eee" stroke-width="2"/></svg>
</div>

<!-- ============ LEFT DIALOG ============ -->
<div id="dlg">
<div class="a" style="left:13px;top:284px;width:598px;height:737px;background:#fff;box-shadow:0 0 3px rgba(0,0,0,0.35)"></div>
<div class="t" style="left:22px;top:293px;color:#a0a0a0">Verifique o equipamento mínimo de acordo com ABNT NBR 5410</div>
<div class="a" style="left:585px;top:292px;width:25px;height:25px;background:#e6e6e6"></div>
<svg style="left:593px;top:300px" width="9" height="9"><path d="M1 1L8 8M8 1L1 8" stroke="#fafafa" stroke-width="1.2"/></svg>
<div class="a" style="left:13px;top:321px;width:597px;height:30px;background:#f0f0f0;border-bottom:1px solid #a0a0a0"></div>
<svg style="left:13px;top:321px" width="597" height="30">
<defs><linearGradient id="rf" x1="0" y1="0" x2="0" y2="1"><stop offset="0" stop-color="#3aa0f0"/><stop offset="1" stop-color="#8ed0ff"/></linearGradient></defs>
<path d="M6 13Q7 5 15 5Q19 5 21 8L23 6V13H16L18 11Q16 9 14 9Q10 9 9 13Z" fill="url(#rf)"/><path d="M22 13Q21 21 13 21Q9 21 7 18L5 20V13H12L10 15Q12 17 14 17Q18 17 19 13Z" fill="url(#rf)"/>
<rect x="32" y="6" width="14" height="14" fill="#e6eef6" stroke="#3a5a9a"/><path d="M34 8L37 11M37 8L34 11" stroke="#e33"/><path d="M36 16H50V24H36Z" fill="#111"/><circle cx="39" cy="22" r="3" fill="#111" stroke="#eee"/><circle cx="47" cy="22" r="3" fill="#111" stroke="#eee"/>
<path d="M58.5 5V26" stroke="#999"/>
<rect x="71" y="7" width="11" height="15" fill="#d0e0f0" stroke="#6a90c0"/><rect x="76" y="11" width="11" height="14" fill="#e0ecf6" stroke="#6a90c0"/>
<rect x="102" y="5" width="16" height="14" fill="#fff" stroke="#222"/><path d="M102 9H118M102 13H118M108 5V19" stroke="#222"/><path d="M106 13H124V26H106Z" fill="#2a6ab0"/><rect x="110" y="20" width="8" height="6" fill="#ddd"/>
<path d="M137 14H143L140 17Z" fill="#222"/>
<path d="M149.5 5V26" stroke="#999"/>
<path d="M160 11H180M164 11V24M170 8V24M176 11V24" stroke="#1a3a7a" stroke-width="2.5"/><rect x="175" y="18" width="6" height="8" fill="#e02020"/><path d="M160 8H170" stroke="#3a8ad0" stroke-width="2"/>
<path d="M186.5 5V26" stroke="#999"/>
<path d="M200 8L214 22M214 8L200 22" stroke="#111" stroke-width="2"/>
</svg>
<div class="a" style="left:14px;top:352px;width:575px;height:623px;background:#fff;overflow:hidden" id="lst">
<div class="a" style="left:396px;top:1px;width:1px;height:26px;background:#e5e5e5"></div><div class="a" style="left:484px;top:1px;width:1px;height:26px;background:#e5e5e5"></div><div class="a" style="left:572px;top:1px;width:1px;height:26px;background:#e5e5e5"></div>
<div class="t" style="left:7px;top:4.2px;color:#000;">Equipamento</div>
<div class="t" style="left:403px;top:4.2px;color:#000;">necessário</div>
<div class="t" style="left:491px;top:4.2px;color:#000;">Presentes</div>
<div class="a" style="left:1px;top:75px;width:573px;height:24px;background:#d9d9d9"></div>
<svg style="left:6px;top:25.5px" width="18" height="16"><defs><linearGradient id="wg" x1="0" y1="0" x2="0" y2="1"><stop offset="0" stop-color="#fff6a0"/><stop offset="1" stop-color="#f0c000"/></linearGradient></defs><path d="M9 0.8L17.3 15.2H0.7Z" fill="url(#wg)" stroke="#c89800" stroke-width="1"/><path d="M9 4.5V10.5" stroke="#222" stroke-width="2"/><rect x="8" y="12" width="2" height="2" fill="#222"/></svg>
<div class="t" style="left:27px;top:23.7px;color:#000;">Potência pontos de tomadas [W]</div>
<div class="t" style="left:403px;top:23.7px;color:#000;">600</div>
<div class="t" style="left:491px;top:23.7px;color:#000;">0</div>
<div class="a" style="left:13px;top:60.8px;width:560px;height:1px;background:#b9c6e2"></div>
<div class="t" style="left:13px;top:51.5px;color:#2c48a0;background:#fff;padding-right:8px;transform:scaleX(0.955);transform-origin:left">[10] QUARTO_1 - Quarto, superfície: 7,5 m²</div>
<svg style="left:4px;top:77.6px" width="22" height="20"><path d="M1 11L6 9L9 14Q14 5 21 1Q13 9 9 19Z" fill="#3cb83c" stroke="#2a8a2a" stroke-width="0.6"/></svg>
<div class="t" style="left:27px;top:77.8px;color:#000;">Ponto de luz de teto</div>
<div class="t" style="left:403px;top:77.8px;color:#000;">1</div>
<div class="t" style="left:491px;top:77.8px;color:#000;">1</div>
<svg style="left:6px;top:104.6px" width="18" height="16"><defs><linearGradient id="wg" x1="0" y1="0" x2="0" y2="1"><stop offset="0" stop-color="#fff6a0"/><stop offset="1" stop-color="#f0c000"/></linearGradient></defs><path d="M9 0.8L17.3 15.2H0.7Z" fill="url(#wg)" stroke="#c89800" stroke-width="1"/><path d="M9 4.5V10.5" stroke="#222" stroke-width="2"/><rect x="8" y="12" width="2" height="2" fill="#222"/></svg>
<div class="t" style="left:27px;top:102.8px;color:#000;">Potência ponto de luz de teto [W]</div>
<div class="t" style="left:403px;top:102.8px;color:#000;">100</div>
<div class="t" style="left:491px;top:102.8px;color:#000;">0</div>
<svg style="left:6px;top:129.6px" width="18" height="16"><defs><linearGradient id="wg" x1="0" y1="0" x2="0" y2="1"><stop offset="0" stop-color="#fff6a0"/><stop offset="1" stop-color="#f0c000"/></linearGradient></defs><path d="M9 0.8L17.3 15.2H0.7Z" fill="url(#wg)" stroke="#c89800" stroke-width="1"/><path d="M9 4.5V10.5" stroke="#222" stroke-width="2"/><rect x="8" y="12" width="2" height="2" fill="#222"/></svg>
<div class="t" style="left:27px;top:127.8px;color:#000;">Pontos de tomadas</div>
<div class="t" style="left:403px;top:127.8px;color:#000;">3</div>
<div class="t" style="left:491px;top:127.8px;color:#000;">1</div>
<svg style="left:6px;top:154.6px" width="18" height="16"><defs><linearGradient id="wg" x1="0" y1="0" x2="0" y2="1"><stop offset="0" stop-color="#fff6a0"/><stop offset="1" stop-color="#f0c000"/></linearGradient></defs><path d="M9 0.8L17.3 15.2H0.7Z" fill="url(#wg)" stroke="#c89800" stroke-width="1"/><path d="M9 4.5V10.5" stroke="#222" stroke-width="2"/><rect x="8" y="12" width="2" height="2" fill="#222"/></svg>
<div class="t" style="left:27px;top:152.8px;color:#000;">Potência pontos de tomadas [W]</div>
<div class="t" style="left:403px;top:152.8px;color:#000;">300</div>
<div class="t" style="left:491px;top:152.8px;color:#000;">0</div>
<div class="a" style="left:13px;top:189.8px;width:560px;height:1px;background:#b9c6e2"></div>
<div class="t" style="left:13px;top:180.5px;color:#2c48a0;background:#fff;padding-right:8px;transform:scaleX(0.955);transform-origin:left">[11] QUARTO_2 - Quarto, superfície: 9,3 m²</div>
<svg style="left:4px;top:206.7px" width="22" height="20"><path d="M1 11L6 9L9 14Q14 5 21 1Q13 9 9 19Z" fill="#3cb83c" stroke="#2a8a2a" stroke-width="0.6"/></svg>
<div class="t" style="left:27px;top:206.9px;color:#000;">Ponto de luz de teto</div>
<div class="t" style="left:403px;top:206.9px;color:#000;">1</div>
<div class="t" style="left:491px;top:206.9px;color:#000;">1</div>
<svg style="left:6px;top:233.7px" width="18" height="16"><defs><linearGradient id="wg" x1="0" y1="0" x2="0" y2="1"><stop offset="0" stop-color="#fff6a0"/><stop offset="1" stop-color="#f0c000"/></linearGradient></defs><path d="M9 0.8L17.3 15.2H0.7Z" fill="url(#wg)" stroke="#c89800" stroke-width="1"/><path d="M9 4.5V10.5" stroke="#222" stroke-width="2"/><rect x="8" y="12" width="2" height="2" fill="#222"/></svg>
<div class="t" style="left:27px;top:231.9px;color:#000;">Potência ponto de luz de teto [W]</div>
<div class="t" style="left:403px;top:231.9px;color:#000;">100</div>
<div class="t" style="left:491px;top:231.9px;color:#000;">0</div>
<svg style="left:6px;top:258.7px" width="18" height="16"><defs><linearGradient id="wg" x1="0" y1="0" x2="0" y2="1"><stop offset="0" stop-color="#fff6a0"/><stop offset="1" stop-color="#f0c000"/></linearGradient></defs><path d="M9 0.8L17.3 15.2H0.7Z" fill="url(#wg)" stroke="#c89800" stroke-width="1"/><path d="M9 4.5V10.5" stroke="#222" stroke-width="2"/><rect x="8" y="12" width="2" height="2" fill="#222"/></svg>
<div class="t" style="left:27px;top:256.9px;color:#000;">Pontos de tomadas</div>
<div class="t" style="left:403px;top:256.9px;color:#000;">3</div>
<div class="t" style="left:491px;top:256.9px;color:#000;">2</div>
<svg style="left:6px;top:283.7px" width="18" height="16"><defs><linearGradient id="wg" x1="0" y1="0" x2="0" y2="1"><stop offset="0" stop-color="#fff6a0"/><stop offset="1" stop-color="#f0c000"/></linearGradient></defs><path d="M9 0.8L17.3 15.2H0.7Z" fill="url(#wg)" stroke="#c89800" stroke-width="1"/><path d="M9 4.5V10.5" stroke="#222" stroke-width="2"/><rect x="8" y="12" width="2" height="2" fill="#222"/></svg>
<div class="t" style="left:27px;top:281.9px;color:#000;">Potência pontos de tomadas [W]</div>
<div class="t" style="left:403px;top:281.9px;color:#000;">300</div>
<div class="t" style="left:491px;top:281.9px;color:#000;">0</div>
<div class="a" style="left:13px;top:318.8px;width:560px;height:1px;background:#b9c6e2"></div>
<div class="t" style="left:13px;top:309.5px;color:#2c48a0;background:#fff;padding-right:8px;transform:scaleX(0.955);transform-origin:left">[12] QUARTO_3 - Quarto, superfície: 18,2 m²</div>
<svg style="left:4px;top:335.7px" width="22" height="20"><path d="M1 11L6 9L9 14Q14 5 21 1Q13 9 9 19Z" fill="#3cb83c" stroke="#2a8a2a" stroke-width="0.6"/></svg>
<div class="t" style="left:27px;top:335.9px;color:#000;">Ponto de luz de teto</div>
<div class="t" style="left:403px;top:335.9px;color:#000;">1</div>
<div class="t" style="left:491px;top:335.9px;color:#000;">2</div>
<svg style="left:6px;top:362.7px" width="18" height="16"><defs><linearGradient id="wg" x1="0" y1="0" x2="0" y2="1"><stop offset="0" stop-color="#fff6a0"/><stop offset="1" stop-color="#f0c000"/></linearGradient></defs><path d="M9 0.8L17.3 15.2H0.7Z" fill="url(#wg)" stroke="#c89800" stroke-width="1"/><path d="M9 4.5V10.5" stroke="#222" stroke-width="2"/><rect x="8" y="12" width="2" height="2" fill="#222"/></svg>
<div class="t" style="left:27px;top:360.9px;color:#000;">Potência ponto de luz de teto [W]</div>
<div class="t" style="left:403px;top:360.9px;color:#000;">280</div>
<div class="t" style="left:491px;top:360.9px;color:#000;">0</div>
<svg style="left:6px;top:387.7px" width="18" height="16"><defs><linearGradient id="wg" x1="0" y1="0" x2="0" y2="1"><stop offset="0" stop-color="#fff6a0"/><stop offset="1" stop-color="#f0c000"/></linearGradient></defs><path d="M9 0.8L17.3 15.2H0.7Z" fill="url(#wg)" stroke="#c89800" stroke-width="1"/><path d="M9 4.5V10.5" stroke="#222" stroke-width="2"/><rect x="8" y="12" width="2" height="2" fill="#222"/></svg>
<div class="t" style="left:27px;top:385.9px;color:#000;">Pontos de tomadas</div>
<div class="t" style="left:403px;top:385.9px;color:#000;">4</div>
<div class="t" style="left:491px;top:385.9px;color:#000;">3</div>
<svg style="left:6px;top:412.7px" width="18" height="16"><defs><linearGradient id="wg" x1="0" y1="0" x2="0" y2="1"><stop offset="0" stop-color="#fff6a0"/><stop offset="1" stop-color="#f0c000"/></linearGradient></defs><path d="M9 0.8L17.3 15.2H0.7Z" fill="url(#wg)" stroke="#c89800" stroke-width="1"/><path d="M9 4.5V10.5" stroke="#222" stroke-width="2"/><rect x="8" y="12" width="2" height="2" fill="#222"/></svg>
<div class="t" style="left:27px;top:410.9px;color:#000;">Potência pontos de tomadas [W]</div>
<div class="t" style="left:403px;top:410.9px;color:#000;">400</div>
<div class="t" style="left:491px;top:410.9px;color:#000;">0</div>
<div class="a" style="left:13px;top:447.8px;width:560px;height:1px;background:#b9c6e2"></div>
<div class="t" style="left:13px;top:438.5px;color:#2c48a0;background:#fff;padding-right:8px;transform:scaleX(0.955);transform-origin:left">[13] TERRAÇO - Terraco, superfície: 5,7 m²</div>
<svg style="left:4px;top:464.7px" width="22" height="20"><path d="M1 11L6 9L9 14Q14 5 21 1Q13 9 9 19Z" fill="#3cb83c" stroke="#2a8a2a" stroke-width="0.6"/></svg>
<div class="t" style="left:27px;top:464.9px;color:#000;">Ponto de luz de teto ou parede</div>
<div class="t" style="left:403px;top:464.9px;color:#000;">1</div>
<div class="t" style="left:491px;top:464.9px;color:#000;">1</div>
<svg style="left:6px;top:491.7px" width="18" height="16"><defs><linearGradient id="wg" x1="0" y1="0" x2="0" y2="1"><stop offset="0" stop-color="#fff6a0"/><stop offset="1" stop-color="#f0c000"/></linearGradient></defs><path d="M9 0.8L17.3 15.2H0.7Z" fill="url(#wg)" stroke="#c89800" stroke-width="1"/><path d="M9 4.5V10.5" stroke="#222" stroke-width="2"/><rect x="8" y="12" width="2" height="2" fill="#222"/></svg>
<div class="t" style="left:27px;top:489.9px;color:#000;">Potência ponto de luz de teto ou parede [W]</div>
<div class="t" style="left:403px;top:489.9px;color:#000;">100</div>
<div class="t" style="left:491px;top:489.9px;color:#000;">0</div>
<svg style="left:6px;top:516.7px" width="18" height="16"><defs><linearGradient id="wg" x1="0" y1="0" x2="0" y2="1"><stop offset="0" stop-color="#fff6a0"/><stop offset="1" stop-color="#f0c000"/></linearGradient></defs><path d="M9 0.8L17.3 15.2H0.7Z" fill="url(#wg)" stroke="#c89800" stroke-width="1"/><path d="M9 4.5V10.5" stroke="#222" stroke-width="2"/><rect x="8" y="12" width="2" height="2" fill="#222"/></svg>
<div class="t" style="left:27px;top:514.9px;color:#000;">Pontos de tomadas</div>
<div class="t" style="left:403px;top:514.9px;color:#000;">1</div>
<div class="t" style="left:491px;top:514.9px;color:#000;">0</div>
<svg style="left:6px;top:541.7px" width="18" height="16"><defs><linearGradient id="wg" x1="0" y1="0" x2="0" y2="1"><stop offset="0" stop-color="#fff6a0"/><stop offset="1" stop-color="#f0c000"/></linearGradient></defs><path d="M9 0.8L17.3 15.2H0.7Z" fill="url(#wg)" stroke="#c89800" stroke-width="1"/><path d="M9 4.5V10.5" stroke="#222" stroke-width="2"/><rect x="8" y="12" width="2" height="2" fill="#222"/></svg>
<div class="t" style="left:27px;top:539.9px;color:#000;">Potência pontos de tomadas [W]</div>
<div class="t" style="left:403px;top:539.9px;color:#000;">100</div>
<div class="t" style="left:491px;top:539.9px;color:#000;">0</div>
<div class="a" style="left:13px;top:576.8px;width:560px;height:1px;background:#b9c6e2"></div>
<div class="t" style="left:13px;top:567.5px;color:#2c48a0;background:#fff;padding-right:8px;transform:scaleX(0.99);transform-origin:left">Unidade imobiliária, superfície: 118,2 m², número da unidade: 1</div>
<svg style="left:5px;top:594.7px" width="19" height="19"><circle cx="9.5" cy="9.5" r="8.3" fill="#f4f6fa" stroke="#5a78d8" stroke-width="1.6"/><rect x="8.3" y="7.5" width="2.4" height="7" fill="#1a3ab0"/><circle cx="9.5" cy="5" r="1.3" fill="#1a3ab0"/></svg>
<div class="t" style="left:27px;top:593.9px;color:#000;">Presença de símbolos não associados a circuitos.</div>
<svg style="left:5px;top:619.7px" width="19" height="19"><circle cx="9.5" cy="9.5" r="8.3" fill="#f4f6fa" stroke="#5a78d8" stroke-width="1.6"/><rect x="8.3" y="7.5" width="2.4" height="7" fill="#1a3ab0"/><circle cx="9.5" cy="5" r="1.3" fill="#1a3ab0"/></svg>
</div>
<div class="a" style="left:589px;top:352px;width:21px;height:623px;background:#f0f0f0"></div>
<div class="a" style="left:589px;top:744px;width:19px;height:193px;background:#cdcdcd"></div>
<svg style="left:593px;top:359px" width="12" height="8"><path d="M1 6.5L6 1.5L11 6.5" fill="none" stroke="#606060" stroke-width="1.5"/></svg>
<svg style="left:593px;top:959px" width="12" height="8"><path d="M1 1.5L6 6.5L11 1.5" fill="none" stroke="#606060" stroke-width="1.5"/></svg>
<div class="a" style="left:14px;top:975px;width:596px;height:20px;background:#f0f0f0"></div>
<div class="a" style="left:36px;top:976px;width:344px;height:18px;background:#cdcdcd"></div>
<svg style="left:20px;top:979px" width="8" height="12"><path d="M6.5 1L1.5 6L6.5 11" fill="none" stroke="#606060" stroke-width="1.5"/></svg>
<svg style="left:574px;top:979px" width="8" height="12"><path d="M1.5 1L6.5 6L1.5 11" fill="none" stroke="#606060" stroke-width="1.5"/></svg>
<div class="a" style="left:14px;top:995px;width:596px;height:1px;background:#a0a0a0"></div>
<div class="a" style="left:14px;top:996px;width:596px;height:25px;background:#f0f0f0"></div>
<svg style="left:596px;top:1007px" width="14" height="13"><g fill="#bbb"><rect x="9" y="1" width="2" height="2"/><rect x="5" y="5" width="2" height="2"/><rect x="9" y="5" width="2" height="2"/><rect x="1" y="9" width="2" height="2"/><rect x="5" y="9" width="2" height="2"/><rect x="9" y="9" width="2" height="2"/></g></svg>
</div>

<!-- ============ RIGHT PANEL ============ -->
<div id="panel">
<div class="a" style="left:1513px;top:253px;width:405px;height:732px;background:#3b4352"></div>
<div class="a" style="left:1518px;top:256px;width:400px;height:29px;background:#2f3540;border-top-left-radius:4px"></div>
<svg style="left:1526px;top:263px" width="6" height="12"><g fill="#c8c8c8"><rect x="0" y="0" width="1.5" height="1.5"/><rect x="3" y="0" width="1.5" height="1.5"/><rect x="0" y="3" width="1.5" height="1.5"/><rect x="3" y="3" width="1.5" height="1.5"/><rect x="0" y="6" width="1.5" height="1.5"/><rect x="3" y="6" width="1.5" height="1.5"/><rect x="0" y="9" width="1.5" height="1.5"/><rect x="3" y="9" width="1.5" height="1.5"/></g></svg>
<div class="t" style="left:1537px;top:259px;color:#eaeaea;font-size:14px;transform:scaleX(0.94);transform-origin:left">PROPRIEDADES</div>
<div class="a" style="left:1518px;top:285px;width:400px;height:697px;background:#f0f0f0"></div>
<div class="a" style="left:1518px;top:285px;width:227px;height:26px;background:#fff;border-right:1px solid #a8a8a8;border-bottom:2px solid #a8a8a8"></div>
<div class="t" style="left:1522px;top:289px;color:#000">Todos os símbolos</div>
<svg style="left:1729px;top:294px" width="12" height="8"><path d="M1 1.5L6 6.5L11 1.5" fill="none" stroke="#555" stroke-width="1.2"/></svg>
<div class="a" style="left:1747px;top:285px;width:4px;height:26px;background:#fff"></div>
<div class="a" style="left:1751px;top:285px;width:167px;height:27px;background:#fff;border-left:1px solid #a8a8a8;border-bottom:1px solid #a8a8a8"></div>
<svg style="left:1899px;top:291px" width="18" height="17"><circle cx="6.5" cy="6.5" r="5" fill="none" stroke="#222" stroke-width="1.8"/><path d="M10 10L16 16" stroke="#222" stroke-width="2.5"/></svg>
<div class="a" style="left:1518px;top:346px;width:398px;height:636px;background:#fff;border-top:1px solid #dcdcdc"></div>
<div class="a" style="left:1600px;top:320px;width:69px;height:26px;background:#f0f0f0;border:1px solid #dcdcdc;border-bottom:none"></div>
<div class="t" style="left:1604px;top:323px;color:#000">Favoritos</div>
<div class="a" style="left:1669px;top:320px;width:78px;height:26px;background:#f0f0f0;border:1px solid #dcdcdc;border-bottom:none"></div>
<div class="t" style="left:1675px;top:323px;color:#000">Diagrama</div>
<div class="a" style="left:1747px;top:320px;width:72px;height:26px;background:#f0f0f0;border:1px solid #dcdcdc;border-bottom:none"></div>
<div class="t" style="left:1754px;top:323px;color:#000">Inspector</div>
<div class="a" style="left:1519px;top:318px;width:82px;height:30px;background:#fff;border:1px solid #dcdcdc;border-bottom:none"></div>
<div class="t" style="left:1526px;top:321px;color:#000">Biblioteca</div>
<div class="a" style="left:1522px;top:349px;width:361px;height:27px;background:#fff;border:1px solid #7a7a7a"></div>
<div class="t" style="left:1525px;top:353px;color:#000">Tomadas</div>
<div class="a" style="left:1863px;top:352px;width:18px;height:21px;background:#e1e1e1;border:1px solid #adadad"></div>
<div class="t" style="left:1866px;top:356px;color:#000;font-size:12px">...</div>
<svg style="left:1892px;top:355px" width="16" height="16"><circle cx="8" cy="8" r="7" fill="#5a5a5a"/><path d="M5 5L11 11M11 5L5 11" stroke="#fff" stroke-width="2.2"/></svg>
<div class="a" style="left:1522px;top:381px;width:394px;height:558px;background:#3b4352;border-top:1px solid #8a8a8a"></div>
<div class="a" style="left:1894px;top:382px;width:22px;height:557px;background:#f0f0f0;border-left:1px solid #d0d0d0"></div>
<div class="a" style="left:1896px;top:705px;width:18px;height:212px;background:#cdcdcd"></div>
<svg style="left:1899px;top:389px" width="12" height="8"><path d="M1 6.5L6 1.5L11 6.5" fill="none" stroke="#606060" stroke-width="1.5"/></svg>
<svg style="left:1899px;top:924px" width="12" height="8"><path d="M1 1.5L6 6.5L11 1.5" fill="none" stroke="#606060" stroke-width="1.5"/></svg>
<div class="a" style="left:1547px;top:382px;width:1px;height:557px;background:#555b63"></div><div class="a" style="left:1627px;top:382px;width:1px;height:557px;background:#555b63"></div>
<div class="a" style="left:1523px;top:682px;width:370px;height:76px;background:#3399ff"></div>
<div class="a" style="left:1550px;top:383px;width:76px;height:71px;background:#000"></div>
<svg style="left:1523px;top:410px" width="18" height="18"><defs><radialGradient id="sg0" cx="0.4" cy="0.35" r="0.7"><stop offset="0" stop-color="#fff"/><stop offset="1" stop-color="#aaa"/></radialGradient></defs><polygon points="9.0,1.0 11.4,6.2 17.1,6.9 12.9,10.8 14.0,16.4 9.0,13.6 4.0,16.4 5.1,10.8 0.9,6.9 6.6,6.2" fill="url(#sg0)" stroke="#777" stroke-width="0.6"/></svg>
<div class="t" style="left:1631px;top:409.2px;color:#f4f4f4">Saída para telefone interno na parede</div>
<div class="a" style="left:1550px;top:458px;width:76px;height:71px;background:#000"></div>
<svg style="left:1523px;top:485px" width="18" height="18"><defs><radialGradient id="sg1" cx="0.4" cy="0.35" r="0.7"><stop offset="0" stop-color="#fff"/><stop offset="1" stop-color="#aaa"/></radialGradient></defs><polygon points="9.0,1.0 11.4,6.2 17.1,6.9 12.9,10.8 14.0,16.4 9.0,13.6 4.0,16.4 5.1,10.8 0.9,6.9 6.6,6.2" fill="url(#sg1)" stroke="#777" stroke-width="0.6"/></svg>
<div class="t" style="left:1631px;top:484.2px;color:#f4f4f4">Saída para telefone interno no piso</div>
<div class="a" style="left:1550px;top:533px;width:76px;height:71px;background:#000"></div>
<svg style="left:1523px;top:560px" width="18" height="18"><defs><radialGradient id="sg2" cx="0.4" cy="0.35" r="0.7"><stop offset="0" stop-color="#fff"/><stop offset="1" stop-color="#aaa"/></radialGradient></defs><polygon points="9.0,1.0 11.4,6.2 17.1,6.9 12.9,10.8 14.0,16.4 9.0,13.6 4.0,16.4 5.1,10.8 0.9,6.9 6.6,6.2" fill="url(#sg2)" stroke="#777" stroke-width="0.6"/></svg>
<div class="t" style="left:1631px;top:559.2px;color:#f4f4f4">Tomada de luz a meio a altura</div>
<div class="a" style="left:1550px;top:608px;width:76px;height:71px;background:#000"></div>
<svg style="left:1523px;top:635px" width="18" height="18"><defs><radialGradient id="sg3" cx="0.4" cy="0.35" r="0.7"><stop offset="0" stop-color="#fff"/><stop offset="1" stop-color="#aaa"/></radialGradient></defs><polygon points="9.0,1.0 11.4,6.2 17.1,6.9 12.9,10.8 14.0,16.4 9.0,13.6 4.0,16.4 5.1,10.8 0.9,6.9 6.6,6.2" fill="url(#sg3)" stroke="#777" stroke-width="0.6"/></svg>
<div class="t" style="left:1631px;top:634.2px;color:#f4f4f4">Tomada de luz alta</div>
<div class="a" style="left:1548px;top:682px;width:80px;height:74px;background:#000;border:2px solid #5aa8ff"></div>
<svg style="left:1523px;top:710px" width="18" height="18"><defs><radialGradient id="sg4" cx="0.4" cy="0.35" r="0.7"><stop offset="0" stop-color="#fff"/><stop offset="1" stop-color="#aaa"/></radialGradient></defs><polygon points="9.0,1.0 11.4,6.2 17.1,6.9 12.9,10.8 14.0,16.4 9.0,13.6 4.0,16.4 5.1,10.8 0.9,6.9 6.6,6.2" fill="url(#sg4)" stroke="#777" stroke-width="0.6"/></svg>
<div class="t" style="left:1631px;top:709.2px;color:#f4f4f4">Tomada de luz na parede, baixo</div>
<div class="a" style="left:1550px;top:758px;width:76px;height:71px;background:#000"></div>
<svg style="left:1523px;top:785px" width="18" height="18"><defs><radialGradient id="sg5" cx="0.4" cy="0.35" r="0.7"><stop offset="0" stop-color="#fff"/><stop offset="1" stop-color="#aaa"/></radialGradient></defs><polygon points="9.0,1.0 11.4,6.2 17.1,6.9 12.9,10.8 14.0,16.4 9.0,13.6 4.0,16.4 5.1,10.8 0.9,6.9 6.6,6.2" fill="url(#sg5)" stroke="#777" stroke-width="0.6"/></svg>
<div class="t" style="left:1631px;top:784.2px;color:#f4f4f4">Tomada de luz no piso</div>
<div class="a" style="left:1550px;top:833px;width:76px;height:71px;background:#000"></div>
<svg style="left:1523px;top:860px" width="18" height="18"><defs><radialGradient id="sg6" cx="0.4" cy="0.35" r="0.7"><stop offset="0" stop-color="#fff"/><stop offset="1" stop-color="#aaa"/></radialGradient></defs><polygon points="9.0,1.0 11.4,6.2 17.1,6.9 12.9,10.8 14.0,16.4 9.0,13.6 4.0,16.4 5.1,10.8 0.9,6.9 6.6,6.2" fill="url(#sg6)" stroke="#777" stroke-width="0.6"/></svg>
<div class="t" style="left:1631px;top:859.2px;color:#f4f4f4">Tomada para rádio e televisão</div>
<svg style="left:0;top:0" width="1918" height="1026"><path d="M1575 402H1601L1588 424Z M1588 424V437" fill="none" stroke="#fff" stroke-width="1.2"/><path d="M1585 435L1591 440M1591 434L1585 439" stroke="#00e5ff" stroke-width="1.2"/><circle cx="1588" cy="437" r="2.5" fill="none" stroke="#00e5ff" stroke-width="1.2"/><rect x="1569.5" y="477.5" width="38" height="36" fill="none" stroke="#fff" stroke-width="1.2"/><path d="M1579.5 481V511M1607 480L1580 495L1607 511" fill="none" stroke="#fff" stroke-width="1.2"/><path d="M1583 490L1593 501M1593 490L1583 501" stroke="#00e5ff" stroke-width="1.2"/><circle cx="1588" cy="495.5" r="4" fill="none" stroke="#00e5ff" stroke-width="1.4"/><path d="M1588 553L1575 574H1601Z" fill="none" stroke="#fff" stroke-width="1.2"/><path d="M1588 553L1601 574H1588Z" fill="#fff"/><path d="M1588 574V586" stroke="#fff" stroke-width="1.2"/><path d="M1585 586L1591 591M1591 585L1585 590" stroke="#00e5ff" stroke-width="1.2"/><circle cx="1588" cy="588" r="2.5" fill="none" stroke="#00e5ff" stroke-width="1.2"/><path d="M1588 627L1575 649H1601Z" fill="#fff" stroke="#fff" stroke-width="1.2"/><path d="M1588 649V661" stroke="#fff" stroke-width="1.2"/><path d="M1585 661L1591 666M1591 660L1585 665" stroke="#00e5ff" stroke-width="1.2"/><circle cx="1588" cy="663" r="2.5" fill="none" stroke="#00e5ff" stroke-width="1.2"/><path d="M1588 703L1575 724H1601Z" fill="none" stroke="#fff" stroke-width="1.2"/><path d="M1588 724V736" stroke="#fff" stroke-width="1.2"/><path d="M1585 736L1591 741M1591 735L1585 740" stroke="#00e5ff" stroke-width="1.2"/><circle cx="1588" cy="738" r="2.5" fill="none" stroke="#00e5ff" stroke-width="1.2"/><rect x="1569" y="777" width="39" height="37" fill="none" stroke="#fff" stroke-width="1.2"/><path d="M1579 780L1607 795L1579 810Z" fill="none" stroke="#fff" stroke-width="1.2"/><path d="M1585 793L1591 798M1591 792L1585 797" stroke="#00e5ff" stroke-width="1.2"/><circle cx="1588" cy="795" r="2.5" fill="none" stroke="#00e5ff" stroke-width="1.2"/><circle cx="1588" cy="864" r="12" fill="none" stroke="#fff" stroke-width="1.2"/><path d="M1588 852A12 12 0 0 1 1588 876Z" fill="#fff"/><path d="M1588 876V887" stroke="#fff" stroke-width="1.2"/><path d="M1585 887L1591 892M1591 886L1585 891" stroke="#00e5ff" stroke-width="1.2"/><circle cx="1588" cy="889" r="2.5" fill="none" stroke="#00e5ff" stroke-width="1.2"/></svg>
<div class="a" style="left:1661px;top:944px;width:116px;height:28px;background:#f0f0f0"></div>
<svg style="left:1661px;top:944px" width="116" height="28"><g fill="#c4c4c4" stroke="#b0b0b0" stroke-width="0.8"><rect x="7" y="8" width="2" height="12"/><path d="M22 8V20L11 14Z"/><path d="M49 8V20L38 14Z"/><path d="M66 8V20L77 14Z"/><path d="M94 8V20L105 14Z"/><rect x="106" y="8" width="2" height="12"/></g></svg>
<div class="a" style="left:1518px;top:981px;width:400px;height:1px;background:#d0d0d0"></div>
</div>

<!-- ============ INSERTION DIALOG ============ -->
<div id="ins">
<div class="a" style="left:1091px;top:774px;width:421px;height:196px;background:#f0f0f0;box-shadow:2px 3px 6px rgba(0,0,0,0.35);border:1px solid #c8c8c8"></div>
<div class="a" style="left:1092px;top:775px;width:419px;height:36px;background:#fff"></div>
<div class="t" style="left:1101px;top:783px;color:#a0a0a0">Inserção símbolos</div>
<div class="a" style="left:1098px;top:818px;width:16px;height:16px;background:#fff;border:1px solid #333"></div>
<div class="t" style="left:1118px;top:817px;color:#000">Ponto médio</div>
<div class="a" style="left:1098px;top:843px;width:16px;height:16px;background:#fff;border:1px solid #333"></div><svg style="left:1100px;top:846px" width="12" height="10"><path d="M1 5L4.5 8.5L11 1.5" fill="none" stroke="#222" stroke-width="1.3"/></svg>
<div class="t" style="left:1118px;top:842px;color:#000">Distância da parede:</div>
<div class="a" style="left:1284px;top:839px;width:80px;height:26px;background:#fff;border:1px solid #7a7a7a"></div>
<div class="t" style="left:1284px;top:843px;width:76px;text-align:right;color:#000">0 cm</div>
<div class="a" style="left:1373px;top:840px;width:69px;height:24px;background:#e1e1e1;border:1px solid #adadad"></div>
<div class="t" style="left:1373px;top:842px;width:69px;text-align:center;color:#000">Layers</div>
<div class="a" style="left:1106px;top:870px;width:5px;height:92px;background:#e6e6e6;border:1px solid #d4d4d4"></div>
<div class="a" style="left:1124px;top:876px;width:3px;height:1px;background:#b0b0b0"></div>
<div class="a" style="left:1124px;top:896px;width:3px;height:1px;background:#b0b0b0"></div>
<div class="a" style="left:1124px;top:916px;width:3px;height:1px;background:#b0b0b0"></div>
<div class="a" style="left:1124px;top:936px;width:3px;height:1px;background:#b0b0b0"></div>
<div class="a" style="left:1124px;top:956px;width:3px;height:1px;background:#b0b0b0"></div>
<svg style="left:1099px;top:931px" width="22" height="12"><path d="M0 0H15L20 5.5L15 11H0Z" fill="#0a6fd8"/></svg>
<div class="a" style="left:1149px;top:871px;width:16px;height:16px;background:#fff;border:1px solid #333"></div><svg style="left:1151px;top:874px" width="12" height="10"><path d="M1 5L4.5 8.5L11 1.5" fill="none" stroke="#222" stroke-width="1.3"/></svg>
<div class="t" style="left:1169px;top:870px;color:#000">Auto rotação</div>
<div class="a" style="left:1149px;top:894px;width:351px;height:1px;background:#a0a0a0"></div>
<div class="a" style="left:1149px;top:906px;width:16px;height:16px;background:#fff;border:1px solid #333"></div><svg style="left:1151px;top:909px" width="12" height="10"><path d="M1 5L4.5 8.5L11 1.5" fill="none" stroke="#222" stroke-width="1.3"/></svg>
<div class="t" style="left:1169px;top:905px;color:#000">Manter rotação atributos símbolos</div>
<div class="t" style="left:1149px;top:939px;color:#000">Elevação:</div>
<div class="a" style="left:1239px;top:934px;width:80px;height:26px;background:#fff;border:1px solid #7a7a7a"></div>
<div class="t" style="left:1239px;top:938px;width:77px;text-align:right;color:#000">30 cm</div>
<div class="a" style="left:1329px;top:934px;width:171px;height:28px;background:#e5e5e5;border:1px solid #adadad"></div>
<div class="t" style="left:1334px;top:938px;color:#000">Base (0 m)</div>
<svg style="left:1483px;top:944px" width="12" height="8"><path d="M1 1.5L6 6.5L11 1.5" fill="none" stroke="#333" stroke-width="1.2"/></svg>
</div>

</body></html>
